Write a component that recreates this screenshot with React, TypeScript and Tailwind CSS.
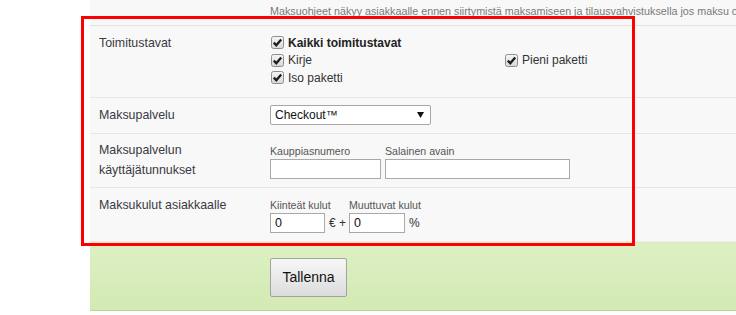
import React from 'react';

function Tick() {
  return (
    <svg width="13" height="13" viewBox="0 0 13 13" className="shrink-0">
      <defs>
        <linearGradient id="cbg" x1="0" y1="0" x2="0" y2="1">
          <stop offset="0" stopColor="#f6f6f6" />
          <stop offset="1" stopColor="#d8d8d8" />
        </linearGradient>
      </defs>
      <rect x="0.5" y="0.5" width="12" height="12" rx="2" fill="url(#cbg)" stroke="#8e8e8e" />
      <path d="M2.8 6.6 L5.3 9.2 L10.2 3.4" fill="none" stroke="#1e1e1e" strokeWidth="2.3" />
    </svg>
  );
}

function CheckItem({ label, bold }: { label: string; bold?: boolean }) {
  return (
    <div className="flex h-[17.5px] items-center gap-[4px] pl-px">
      <Tick />
      <span className={bold ? 'text-[12px] font-bold text-[#222]' : 'text-[12px] text-[#333]'}>{label}</span>
    </div>
  );
}

const labelCls = 'w-[180px] shrink-0 pl-[9px] text-[12.4px] leading-[20px] text-[#3a3a44]';
const smallCls = 'whitespace-nowrap text-[10.6px] leading-[15px] text-[#555]';
const inputCls = 'h-[20px] border border-[#a9a9a9] bg-white px-[4px] text-[12.5px] leading-[18px] text-[#111]';

export default function App() {
  return (
    <div className="relative h-[315px] w-[736px] overflow-hidden bg-white font-['Liberation_Sans',Arial,sans-serif]">
      <div className="ml-[90px] bg-[#f8f8f8]">
        <div className="flex h-[26px] border-b border-[#e2e2e2]">
          <div className="w-[180px] shrink-0" />
          <div className="whitespace-nowrap text-[10.75px] leading-[22px] text-[#7a7a7a]">
            Maksuohjeet näkyy asiakkaalle ennen siirtymistä maksamiseen ja tilausvahvistuksella jos maksu on
          </div>
        </div>

        <div className="flex h-[72px] items-start border-b border-[#e6e6e6]">
          <div className={`${labelCls} pt-[7px]`}>Toimitustavat</div>
          <div className="grid grid-cols-[234px_auto] content-start pt-[8px]">
            <div className="col-span-2">
              <CheckItem label="Kaikki toimitustavat" bold />
            </div>
            <CheckItem label="Kirje" />
            <CheckItem label="Pieni paketti" />
            <CheckItem label="Iso paketti" />
          </div>
        </div>

        <div className="flex h-[36px] items-start border-b border-[#e6e6e6]">
          <div className={`${labelCls} pt-[7px]`}>Maksupalvelu</div>
          <div className="pt-[7px]">
            <div className="flex h-[20px] w-[161px] items-center justify-between rounded-[2px] border border-[#a6a6a6] bg-white pl-[4px] pr-[6px]">
              <span className="text-[12px] text-[#111]">Checkout™</span>
              <svg width="7" height="6" viewBox="0 0 7 6">
                <path d="M0 0 H7 L3.5 6 Z" fill="#111" />
              </svg>
            </div>
          </div>
        </div>

        <div className="flex h-[54px] items-start border-b border-[#e6e6e6]">
          <div className={`${labelCls} pt-[6px] leading-[19px]`}>
            Maksupalvelun
            <br />
            käyttäjätunnukset
          </div>
          <div className="flex gap-[4px] pt-[10px]">
            <div className="flex flex-col">
              <span className={smallCls}>Kauppiasnumero</span>
              <div className={`${inputCls} w-[111px]`} />
            </div>
            <div className="flex flex-col">
              <span className={smallCls}>Salainen avain</span>
              <div className={`${inputCls} w-[185px]`} />
            </div>
          </div>
        </div>

        <div className="flex h-[54px] items-start border-b border-[#ececec]">
          <div className={`${labelCls} pt-[7px]`}>Maksukulut asiakkaalle</div>
          <div className="flex items-end pt-[10px]">
            <div className="flex w-[55px] flex-col">
              <span className={smallCls}>Kiinteät kulut</span>
              <div className={`${inputCls} w-[55px]`}>0</div>
            </div>
            <span className="ml-[4px] mr-[3px] h-[20px] text-[12px] leading-[20px] text-[#333]">€ +</span>
            <div className="flex w-[56px] flex-col">
              <span className={smallCls}>Muuttuvat kulut</span>
              <div className={`${inputCls} w-[56px]`}>0</div>
            </div>
            <span className="ml-[4px] h-[20px] text-[12px] leading-[20px] text-[#333]">%</span>
          </div>
        </div>

        <div className="flex h-[69px] items-start border-b border-[#b7d49a] bg-gradient-to-b from-[#ddf0c4] to-[#d3eab2] pt-[16px]">
          <div className="w-[180px] shrink-0" />
          <button
            type="button"
            className="h-[39px] w-[77px] rounded-[2px] border border-[#a3a3a3] bg-gradient-to-b from-[#f7f7f7] to-[#dcdcdc] text-[14px] text-[#111]"
          >
            Tallenna
          </button>
        </div>
      </div>

      <div className="pointer-events-none absolute left-[81px] top-[16px] h-[230px] w-[554px] border-[3px] border-[#ff0000]" />
    </div>
  );
}
